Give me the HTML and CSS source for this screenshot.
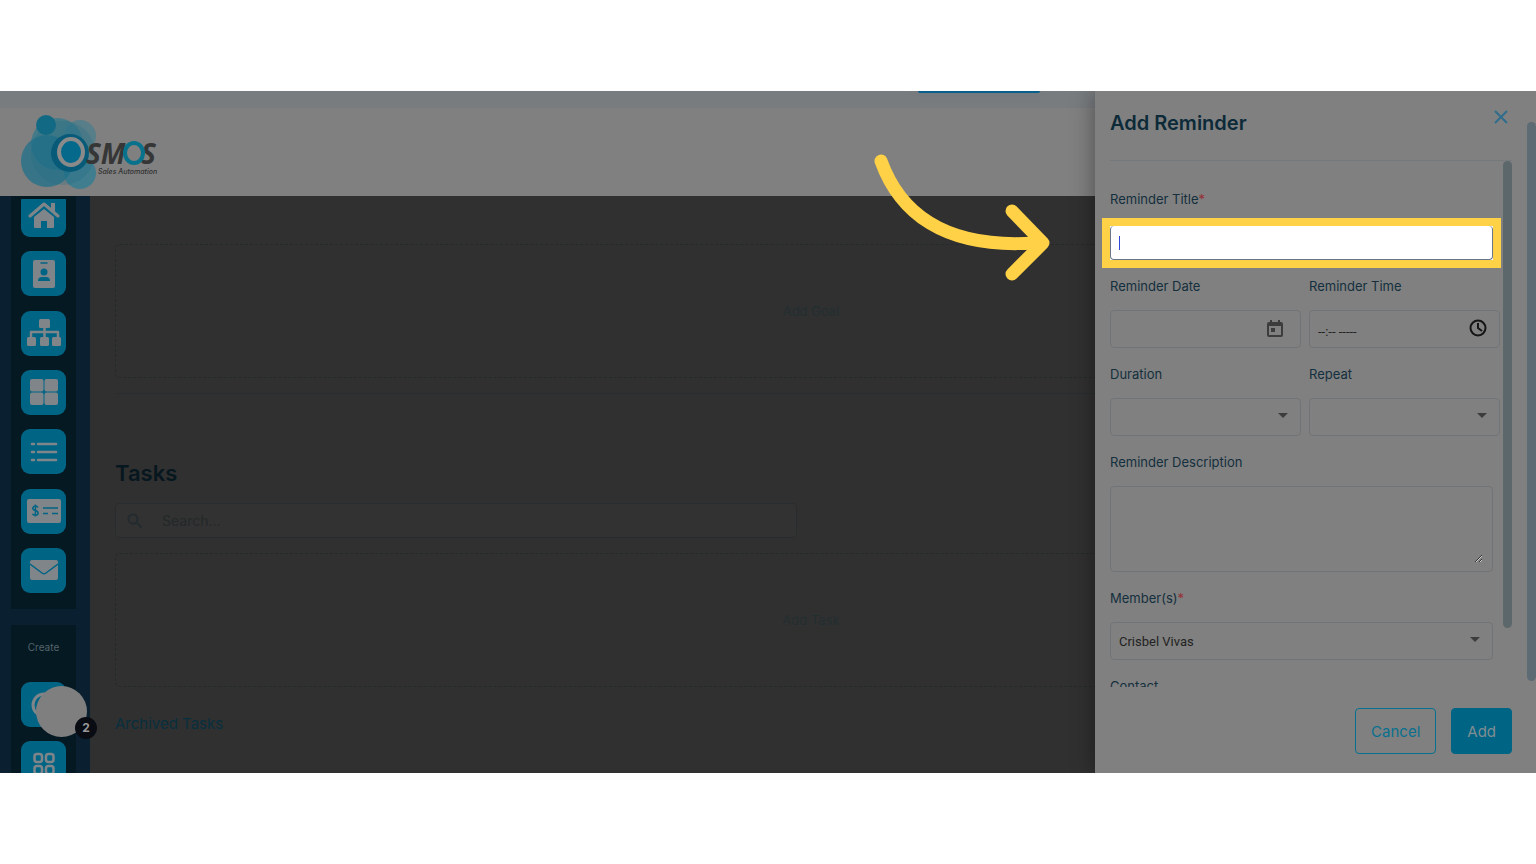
FILE: index.html
```html
<!DOCTYPE html>
<html lang="en">
<head>
    <meta charset="UTF-8">
    <meta name="viewport" content="width=device-width, initial-scale=1.0">
    <title>Osmos - Add Reminder</title>
    <link rel="stylesheet" href="styles.css">
</head>
<body>
    <div class="app">
        <div class="top-strip"><div class="strip-button"></div></div>

        <header class="header">
            <svg class="logo" width="140" height="80" viewBox="0 0 140 80" role="img" aria-label="Osmos Sales Automation">
                <circle cx="60" cy="25" r="16" fill="#4c7d8b" opacity=".8"/>
                <circle cx="60" cy="62" r="16" fill="#397c90" opacity=".9"/>
                <circle cx="37" cy="33" r="26" fill="#32788c" opacity=".75"/>
                <circle cx="27" cy="50" r="26" fill="#1f7089" opacity=".75"/>
                <circle cx="43" cy="42" r="32" fill="#216d83" opacity=".25"/>
                <circle cx="26" cy="14" r="10" fill="#126983"/>
                <circle cx="50" cy="42" r="19" fill="#075a78"/>
                <ellipse cx="51" cy="41" rx="12" ry="13" fill="#04698a" stroke="#8a8a8a" stroke-width="4"/>
                <text class="logo-name" x="66" y="53">SM</text>
                <text class="logo-name" x="121" y="53">S</text>
                <ellipse cx="114" cy="42" rx="9" ry="10" fill="none" stroke="#08718c" stroke-width="4"/>
                <text class="logo-tag" x="78" y="63">Sales Automation</text>
            </svg>
        </header>

        <div class="layout">
            <aside class="sidebar">
                <nav class="side-group main-group" aria-label="Main">
                    <div class="side-list">
                        <button class="side-button" aria-label="Home">
                            <svg width="32" height="28" viewBox="0 0 32 28"><path d="M2 15 16 3l14 12" fill="none" stroke="currentColor" stroke-width="3" stroke-linecap="round" stroke-linejoin="round"/><path d="M23 2h4v10l-4-3z" fill="currentColor"/><path d="M16 8 6 16v10q0 1 1 1h6v-7h6v7h6q1 0 1-1V16z" fill="currentColor"/></svg>
                        </button>
                        <button class="side-button" aria-label="Contacts">
                            <svg width="22" height="28" viewBox="0 0 22 28"><rect width="22" height="28" rx="2" fill="currentColor"/><path d="M8 3h6" stroke="#006484" stroke-width="1.500" stroke-linecap="round"/><circle cx="11" cy="12" r="3.500" fill="#006484"/><path d="M5 21q0-4 4-4h4q4 0 4 4z" fill="#006484"/></svg>
                        </button>
                        <button class="side-button" aria-label="Organization">
                            <svg width="36" height="28" viewBox="0 0 36 28"><g fill="currentColor"><rect x="13" width="11" height="9" rx="1.500"/><rect x="1" y="18" width="9" height="9" rx="1.500"/><rect x="14" y="18" width="9" height="9" rx="1.500"/><rect x="26" y="18" width="9" height="9" rx="1.500"/></g><path d="M18.500 8v10M5 18v-5h27v5" fill="none" stroke="currentColor" stroke-width="2.500" stroke-linejoin="round"/></svg>
                        </button>
                        <button class="side-button" aria-label="Boards">
                            <svg width="28" height="26" viewBox="0 0 28 26" fill="currentColor"><rect width="13.500" height="12.500" rx="2"/><rect x="14.500" width="13.500" height="12.500" rx="2"/><rect y="13.500" width="13.500" height="12.500" rx="2"/><rect x="14.500" y="13.500" width="13.500" height="12.500" rx="2"/></svg>
                        </button>
                        <button class="side-button" aria-label="Lists">
                            <svg width="28" height="20" viewBox="0 0 28 20"><path d="M2 2h2M8 2h18M2 10h2M8 10h18M2 18h2M8 18h18" stroke="currentColor" stroke-width="2.500" stroke-linecap="round"/></svg>
                        </button>
                        <button class="side-button" aria-label="Invoices">
                            <svg width="36" height="26" viewBox="0 0 36 26"><rect x="1" y="1" width="34" height="24" rx="2" fill="currentColor"/><path d="M12 9.500q-1-1.500-2.800-1.500T6.700 10q0 1.700 2.700 2.500t2.700 2.700q0 2-2.600 2T6.500 15.700M9.400 6.500v12M17 10h15M17 15.500h5M26 15.500h6" fill="none" stroke="#006484" stroke-width="1.500"/></svg>
                        </button>
                        <button class="side-button" aria-label="Mail">
                            <svg width="28" height="22" viewBox="0 0 28 22"><rect y="1" width="28" height="20" rx="2" fill="currentColor"/><path d="m0 5 12 9q2 1.500 4 0l12-9" fill="none" stroke="#006484" stroke-width="1.500"/></svg>
                        </button>
                    </div>
                </nav>
                <nav class="side-group create-group" aria-label="Create">
                    <span class="side-title">Create</span>
                    <button class="side-button" aria-label="New search">
                        <svg width="26" height="26" viewBox="0 0 26 26"><circle cx="13" cy="13" r="11" fill="none" stroke="currentColor" stroke-width="3"/></svg>
                    </button>
                    <button class="side-button" aria-label="Apps">
                        <svg width="22" height="24" viewBox="0 0 22 24" fill="none" stroke="currentColor" stroke-width="2.500"><rect x="1.500" y="2" width="7.500" height="8" rx="2.500"/><rect x="13" y="2" width="7.500" height="8" rx="2.500"/><rect x="1.500" y="14" width="7.500" height="8" rx="2.500"/><rect x="13" y="14" width="7.500" height="8" rx="2.500"/></svg>
                    </button>
                </nav>
                <button class="chat-bubble" aria-label="Chat"><span class="chat-count">2</span></button>
            </aside>

            <main class="content">
                <button class="drop-box">Add Goal</button>
                <hr class="divider">
                <h2 class="section-title">Tasks</h2>
                <div class="search">
                    <svg width="16" height="16" viewBox="0 0 16 16" fill="none" stroke="currentColor" stroke-width="2"><circle cx="6" cy="6" r="4.500"/><path d="m9.500 9.500 5 5"/></svg>
                    <input type="text" placeholder="Search..." aria-label="Search tasks">
                </div>
                <button class="drop-box">Add Task</button>
                <a class="archived" href="#">Archived Tasks</a>
            </main>
        </div>

        <!-- Reminder drawer -->
        <section class="drawer" aria-labelledby="drawer-title">
            <div class="drawer-head">
                <h2 id="drawer-title">Add Reminder</h2>
                <button class="close" aria-label="Close">
                    <svg width="14" height="14" viewBox="0 0 14 14"><path d="m1 1 12 12M13 1 1 13" stroke="currentColor" stroke-width="2"/></svg>
                </button>
            </div>

            <div class="drawer-body">
                <form class="fields">
                    <div class="field">
                        <label for="title">Reminder Title<span class="required">*</span></label>
                        <div class="highlight">
                            <input id="title" type="text">
                            <span class="caret"></span>
                        </div>
                    </div>
                    <div class="field-row">
                        <div class="field">
                            <label for="date">Reminder Date</label>
                            <div class="control">
                                <input id="date" type="text">
                                <svg class="icon-date" width="16" height="17" viewBox="0 0 16 17"><path d="M3 0h2v2h6V0h2v2h1q2 0 2 2v11q0 2-2 2H2q-2 0-2-2V4q0-2 2-2h1zM2 6v9h12V6z" fill="currentColor" fill-rule="evenodd"/><path d="M4 8h4v4H4z" fill="currentColor"/></svg>
                            </div>
                        </div>
                        <div class="field">
                            <label for="time">Reminder Time</label>
                            <div class="control time">
                                <input id="time" type="text" value="--:-- -----">
                                <svg class="icon-time" width="18" height="18" viewBox="0 0 18 18" fill="none" stroke="currentColor" stroke-width="2"><circle cx="9" cy="9" r="7.500"/><path d="M9 4v5l4 3"/></svg>
                            </div>
                        </div>
                    </div>
                    <div class="field-row">
                        <div class="field">
                            <label for="duration">Duration</label>
                            <div class="control select"><select id="duration"><option></option></select></div>
                        </div>
                        <div class="field">
                            <label for="repeat">Repeat</label>
                            <div class="control select"><select id="repeat"><option></option></select></div>
                        </div>
                    </div>
                    <div class="field">
                        <label for="description">Reminder Description</label>
                        <div class="control area"><textarea id="description"></textarea></div>
                    </div>
                    <div class="field">
                        <label for="members">Member(s)<span class="required">*</span></label>
                        <div class="control select"><select id="members"><option>Crisbel Vivas</option></select></div>
                    </div>
                    <div class="field">
                        <label for="contact">Contact</label>
                        <div class="control select"><select id="contact"><option></option></select></div>
                    </div>
                </form>
                <div class="scroll-thumb"></div>
            </div>

            <div class="drawer-foot">
                <button class="cancel">Cancel</button>
                <button class="add">Add</button>
            </div>
            <div class="page-thumb"></div>
        </section>

        <svg class="arrow" width="180" height="132" viewBox="0 0 180 132" fill="none" stroke="#ffd146" stroke-width="13" stroke-linecap="round" stroke-linejoin="round" aria-hidden="true">
            <path d="M7 10C25 60 68 98 160 92"/>
            <path d="m138 60 31 32-31 31"/>
        </svg>
    </div>
</body>
</html>
```

FILE: styles.css
```css
:root {
    --panel: #808080;
    --dim: #303030;
    --navy: #0a2030;
    --navy-dark: #051922;
    --cyan: #006484;
    --ink: #142f3d;
    --line: #707476;
    --highlight: #ffd146;
}

* {
    box-sizing: border-box;
}

body {
    margin: 0;
    height: 100vh;
    padding: 91px 0;
    background: #fff;
    font-family: Inter, "Open Sans", sans-serif;
    color: var(--ink);
}

button,
input,
select,
textarea {
    font: inherit;
    color: inherit;
    background: none;
    border: none;
    padding: 0;
    outline: none;
}

svg {
    display: block;
}

.app {
    position: relative;
    display: flex;
    flex-direction: column;
    height: 100%;
    overflow: hidden;
    background: var(--dim);
}

.top-strip {
    flex: none;
    height: 17px;
    padding-left: 918px;
    background: #797c7f;
}

.strip-button {
    width: 122px;
    height: 2px;
    border-radius: 0 0 3px 3px;
    background: #075f8b;
    box-shadow: 0 2px 8px #65727b;
}

.header {
    flex: none;
    height: 88px;
    padding: 3px 20px;
    background: var(--panel);
}

.logo-name {
    font: italic 700 28px "Open Sans", sans-serif;
    fill: #363636;
}

.logo-tag {
    font: italic 500 7px Inter, sans-serif;
    fill: #303030;
}

.layout {
    flex: 1;
    display: flex;
    min-height: 0;
}

/* Sidebar */
.sidebar {
    position: relative;
    flex: none;
    display: flex;
    flex-direction: column;
    gap: 16px;
    width: 90px;
    padding: 0 14px 0 11px;
    background: var(--navy);
}

.side-group {
    overflow: hidden;
    background: var(--navy-dark);
}

.main-group {
    flex: none;
    padding-bottom: 16px;
    border-top: 3px solid var(--navy-dark);
}

.side-list {
    display: flex;
    flex-direction: column;
    align-items: center;
    justify-content: space-between;
    height: 401px;
    margin-top: -7px;
}

.side-button {
    flex: none;
    display: flex;
    align-items: center;
    justify-content: center;
    width: 45px;
    height: 45px;
    border-radius: 9px;
    background: var(--cyan);
    color: #808589;
}

.create-group {
    flex: 1;
    display: flex;
    flex-direction: column;
    align-items: center;
    gap: 14px;
    padding-top: 15px;
}

.side-title {
    margin-bottom: 13px;
    font-size: 10px;
    line-height: 15px;
    color: #55636b;
}

.chat-bubble {
    position: absolute;
    left: 36px;
    bottom: 36px;
    width: 51px;
    height: 51px;
    border-radius: 50%;
    background: #7f7f7f;
}

.chat-count {
    position: absolute;
    right: -10px;
    bottom: -2px;
    width: 22px;
    height: 22px;
    border-radius: 50%;
    background: #0a0c14;
    color: #999;
    font-size: 12px;
    font-weight: 700;
    line-height: 22px;
}

/* Main content */
.content {
    flex: 1;
    display: flex;
    flex-direction: column;
    align-items: flex-start;
    padding: 48px 29px 0 25px;
}

.drop-box {
    flex: none;
    width: 100%;
    height: 134px;
    border: 1px dashed #24292b;
    border-radius: 5px;
    color: #232e31;
    font-size: 13px;
}

.divider {
    width: 100%;
    margin: 15px 0 0;
    border: 0;
    border-top: 1px solid #292d2f;
}

.section-title {
    margin: 63px 0 14px;
    font-size: 22px;
    font-weight: 600;
    line-height: 32px;
    color: #07171f;
}

.search {
    display: flex;
    align-items: center;
    gap: 19px;
    width: 49%;
    height: 35px;
    margin-bottom: 15px;
    padding: 0 11px;
    border: 1px solid #292c2e;
    border-radius: 4px;
    background: #323232;
    color: #232b2e;
}

.search input {
    flex: 1;
    font-size: 14px;
}

.search input::placeholder {
    color: #232829;
}

.archived {
    margin-top: 25px;
    font-size: 15px;
    line-height: 24px;
    color: #082f3e;
    text-decoration: none;
}

/* Drawer */
.drawer {
    position: absolute;
    top: 0;
    right: 0;
    bottom: 0;
    display: flex;
    flex-direction: column;
    width: 441px;
    background: var(--panel);
    box-shadow: 0 0 22px rgba(0, 0, 0, 0.4);
}

.drawer-head {
    flex: none;
    display: flex;
    justify-content: space-between;
    height: 70px;
    margin: 0 24px 0 15px;
    padding: 18px 4px 0 0;
    border-bottom: 1px solid #747a7c;
}

.drawer-head h2 {
    margin: 0;
    font-size: 20px;
    font-weight: 600;
    line-height: 28px;
    color: #0c2a38;
}

.close {
    align-self: flex-start;
    padding: 1px 0;
    color: #2f6d8d;
}

.drawer-body {
    flex: 1;
    display: flex;
    align-items: flex-start;
    gap: 10px;
    min-height: 0;
    padding: 0 24px 0 15px;
    overflow: hidden;
}

.fields {
    flex: 1;
    display: flex;
    flex-direction: column;
    gap: 16px;
    padding-top: 28px;
}

.field {
    display: flex;
    flex-direction: column;
    gap: 14px;
    min-width: 0;
}

.field-row {
    display: grid;
    grid-template-columns: 1fr 1fr;
    gap: 8px;
    margin-right: -7px;
}

label {
    font-size: 13px;
    line-height: 20px;
}

.required {
    color: #962f35;
}

.highlight {
    position: relative;
    height: 34px;
    margin-top: 3px;
    background: #fff;
    outline: 8px solid var(--highlight);
}

.highlight input {
    width: 100%;
    height: 100%;
    padding: 0 9px;
    border: 1px solid #697588;
    border-top: 0;
    border-radius: 4px;
}

.caret {
    position: absolute;
    left: 9px;
    top: 10px;
    width: 1px;
    height: 14px;
    background: #3348d6;
}

.control {
    position: relative;
    display: flex;
    align-items: center;
    height: 38px;
    border: 1px solid var(--line);
    border-radius: 4px;
    font-family: Roboto, sans-serif;
    font-size: 13px;
    color: #222;
}

.control input,
.control select {
    flex: 1;
    min-width: 0;
    height: 100%;
    padding: 0 8px;
    appearance: none;
}

.icon-date {
    margin: 0 17px 2px 0;
    color: #3c3c3c;
}

.icon-time {
    margin: 0 12px 2px 0;
    color: #151515;
}

.time input {
    padding-top: 5px;
}

.select::after {
    content: "";
    position: absolute;
    right: 12px;
    top: 14px;
    border: 5px solid transparent;
    border-top-color: #3c3c3c;
    border-bottom: 0;
    pointer-events: none;
}

.area {
    height: 86px;
    padding: 8px 9px;
}

.area textarea {
    width: 100%;
    height: 100%;
    resize: vertical;
}

.scroll-thumb {
    flex: none;
    width: 9px;
    height: 467px;
    border-radius: 5px;
    background: #5b676b;
}

.drawer-foot {
    flex: none;
    display: flex;
    justify-content: flex-end;
    gap: 15px;
    padding: 21px 24px 19px;
}

.drawer-foot button {
    height: 46px;
    padding: 0 15px;
    border: 1px solid #08708f;
    border-radius: 4px;
    font-size: 15px;
    color: #08708f;
}

.drawer-foot .add {
    background: var(--cyan);
    border-color: var(--cyan);
    color: #808d92;
}

.page-thumb {
    position: absolute;
    top: 31px;
    right: 0;
    width: 9px;
    height: 559px;
    border-radius: 5px;
    background: #5d6b74;
}

.arrow {
    position: absolute;
    top: 60px;
    right: 482px;
}
```
